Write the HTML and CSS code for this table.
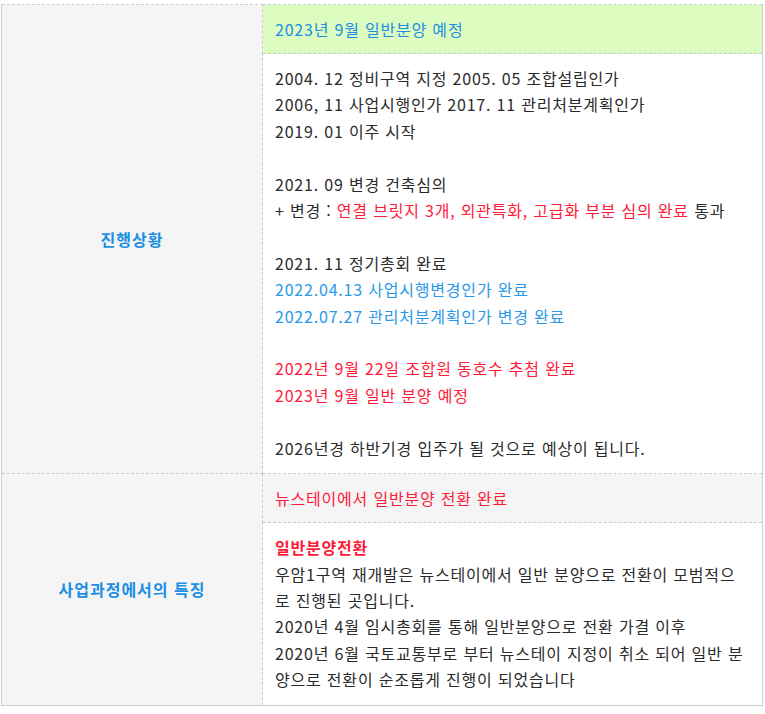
FILE: index.html
```html
<!DOCTYPE html>
<html lang="ko">
<head>
<meta charset="utf-8">
<link rel="stylesheet" href="styles.css">
</head>
<body>
<table class="info">
  <colgroup><col class="col-label"><col class="col-body"></colgroup>
  <tr>
    <th class="label" rowspan="2">진행상황</th>
    <td class="head head-green">2023년 9월 일반분양 예정</td>
  </tr>
  <tr>
    <td class="body">2004. 12 정비구역 지정 2005. 05 조합설립인가<br>2006, 11 사업시행인가 2017. 11 관리처분계획인가<br>2019. 01 이주 시작<br><br>2021. 09 변경 건축심의<br>+ 변경 : <span class="red">연결 브릿지 3개, 외관특화, 고급화 부분 심의 완료</span> 통과<br><br>2021. 11 정기총회 완료<br><span class="blue">2022.04.13 사업시행변경인가 완료</span><br><span class="blue">2022.07.27 관리처분계획인가 변경 완료</span><br><br><span class="red">2022년 9월 22일 조합원 동호수 추첨 완료</span><br><span class="red">2023년 9월 일반 분양 예정</span><br><br>2026년경 하반기경 입주가 될 것으로 예상이 됩니다.</td>
  </tr>
  <tr>
    <th class="label" rowspan="2">사업과정에서의 특징</th>
    <td class="head head-gray"><span class="red">뉴스테이에서 일반분양 전환 완료</span></td>
  </tr>
  <tr>
    <td class="body"><strong class="red strong">일반분양전환</strong><br>우암1구역 재개발은 뉴스테이에서 일반 분양으로 전환이 모범적으로 진행된 곳입니다.<br>2020년 4월 임시총회를 통해 일반분양으로 전환 가결 이후<br>2020년 6월 국토교통부로 부터 뉴스테이 지정이 취소 되어 일반 분양으로 전환이 순조롭게 진행이 되었습니다</td>
  </tr>
</table>
</body>
</html>
```

FILE: styles.css
```css
html, body {
  margin: 0;
  padding: 0;
  background: #ffffff;
}
body {
  padding: 4px 0 0 1px;
  font-family: "Noto Sans CJK KR", "Noto Sans", sans-serif;
  color: #2b2b2b;
}
.info {
  width: 762px;
  border-collapse: collapse;
  border-left: 1px solid #cccccc;
  border-right: 1px solid #cccccc;
  border-bottom: 1px solid #cccccc;
  table-layout: fixed;
}
.col-label { width: 261px; }
.info th, .info td {
  border: 1px dashed #cccccc;
  text-align: left;
  vertical-align: middle;
}
.label {
  background: #f5f5f5;
  color: #1a8fe3;
  font-size: 16px;
  font-weight: 700;
  letter-spacing: 1px;
  text-align: center !important;
}
.head {
  padding: 11px 12px 11px 12px;
  font-size: 16px;
  line-height: 26px;
  letter-spacing: 0.8px;
}
.head-green {
  background: #ddfcc0;
  color: #1a8fe3;
}
.head-gray {
  background: #f5f5f5;
}
.body {
  padding: 11px 12px 12px 12px;
  font-size: 16px;
  line-height: 26.4px;
  letter-spacing: 0.8px;
}
.red { color: #ff1a3a; }
.blue { color: #2a98e8; }
.strong { font-weight: 700; }
```
